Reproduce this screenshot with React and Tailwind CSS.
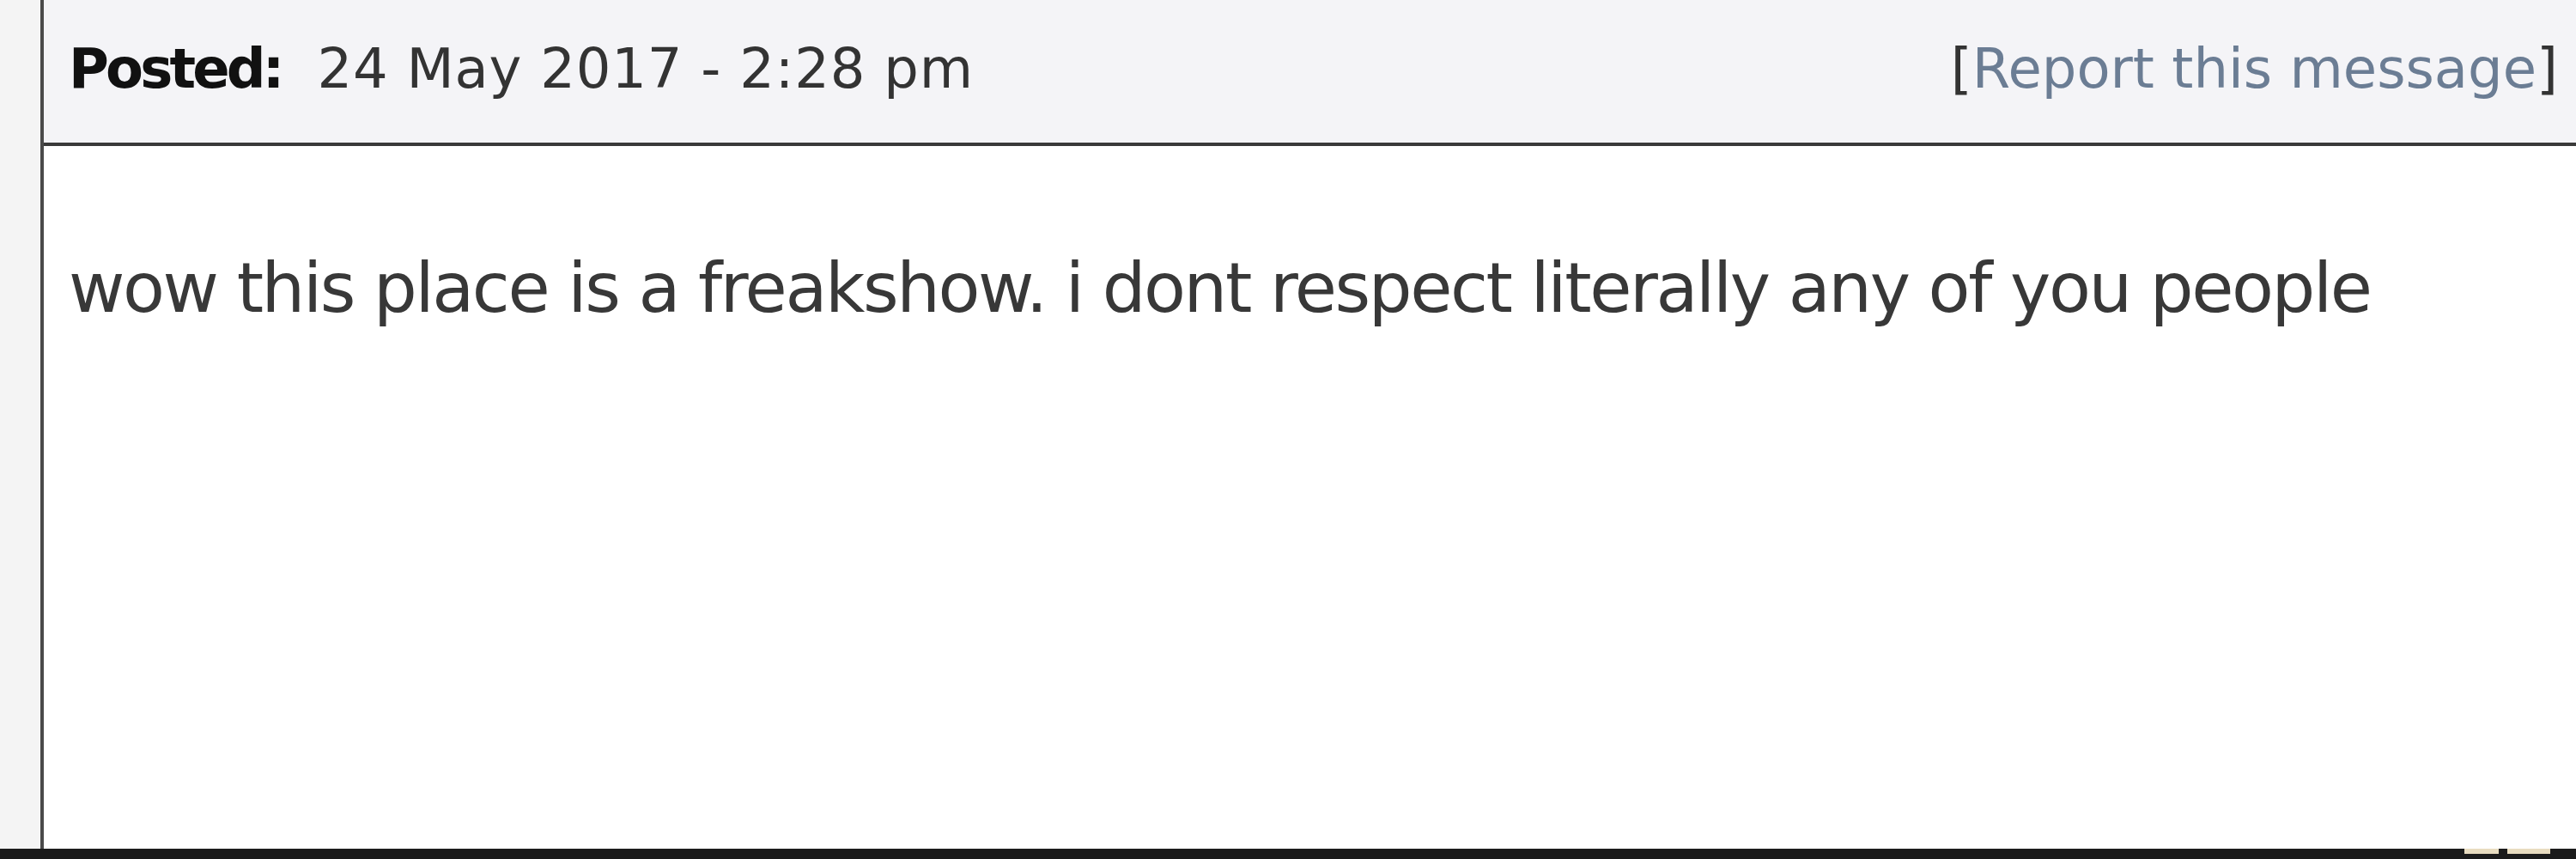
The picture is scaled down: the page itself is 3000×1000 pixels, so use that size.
export default function App() {
  return (
    <div className="w-[3000px] h-[1000px] flex flex-col bg-[#f4f4f4] overflow-hidden" style={{ fontFamily: "Tahoma, 'DejaVu Sans', sans-serif" }}>
      <div className="flex-1 flex">
        <div className="w-[47px] bg-[#f4f4f4]" />
        <div className="flex-1 flex flex-col border-l-[4px] border-[#4a4a4a]">
          <div className="h-[170px] bg-[#f4f4f7] border-b-[4px] border-[#3a3a3a] flex items-center justify-between pl-[29px] pr-[21px] pb-[6px]">
            <div className="text-[64px] text-[#333333] whitespace-nowrap">
              <span className="font-bold text-[#111111] tracking-[-0.06em]">Posted:</span>
              <span className="ml-[42px] tracking-[0.012em]">24 May 2017 - 2:28 pm</span>
            </div>
            <div className="text-[64px] whitespace-nowrap">
              <span className="text-[#333333]">[</span>
              <span className="text-[#6b7d94]">Report this message</span>
              <span className="text-[#333333]">]</span>
            </div>
          </div>
          <div className="flex-1 bg-white pl-[29px] pt-[126px]">
            <div className="text-[80px] leading-none text-[#383838] tracking-[-0.03em] whitespace-nowrap">
              wow this place is a freakshow. i dont respect literally any of you people
            </div>
          </div>
        </div>
      </div>
      <div className="h-[12px] bg-[#1b1b1b] flex justify-end items-start pr-[30px] gap-[10px]">
        <div className="w-[40px] h-[6px] bg-[#e8dcc0]" />
        <div className="w-[50px] h-[6px] bg-[#e8dcc0]" />
      </div>
    </div>
  );
}
